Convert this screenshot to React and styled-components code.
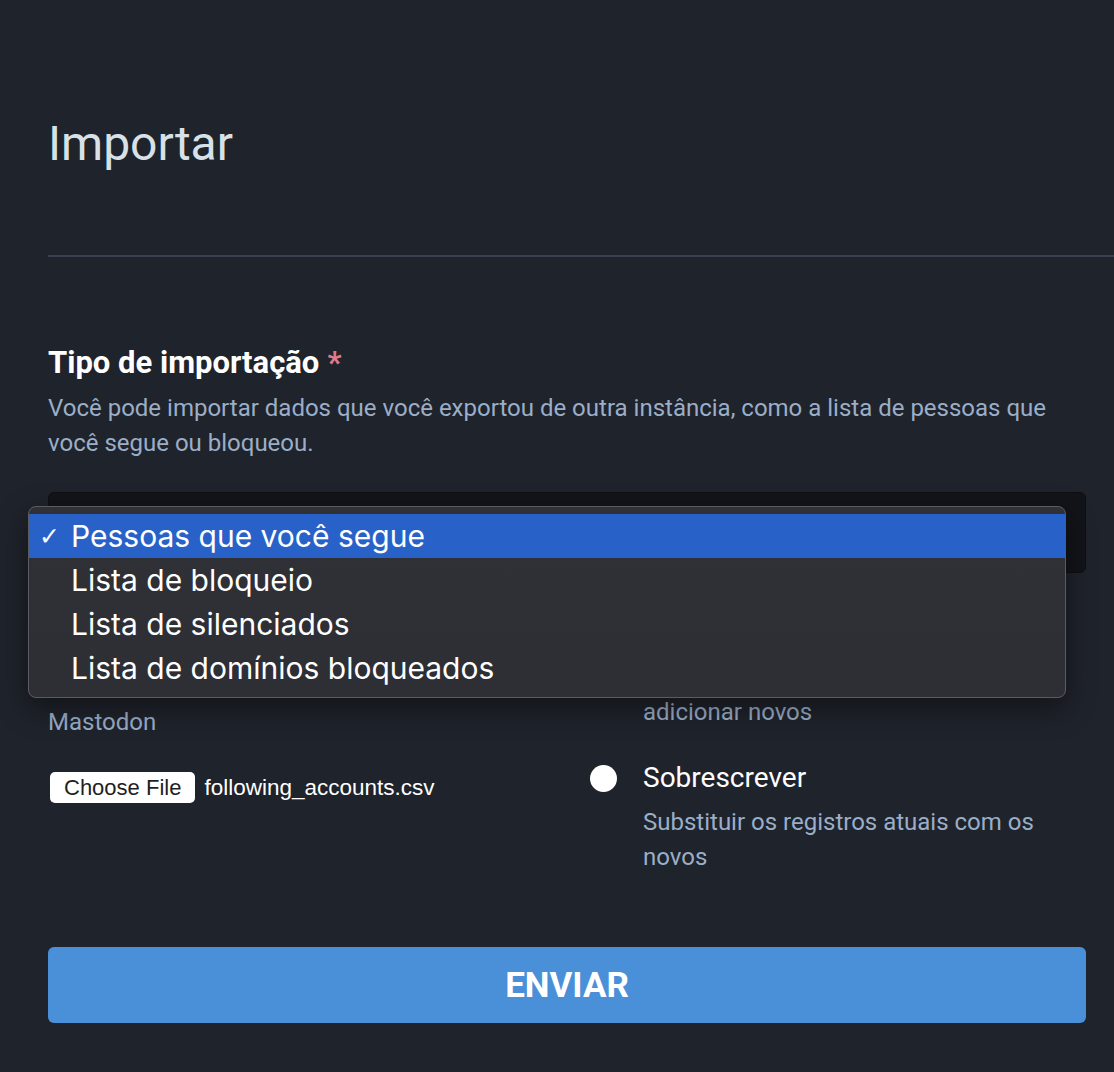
import React from "react";
import styled, { createGlobalStyle } from "styled-components";

const GlobalStyle = createGlobalStyle`
  html, body { margin: 0; padding: 0; background: #1f232b; }
  body { font-family: Roboto, "Noto Sans", sans-serif; -webkit-font-smoothing: antialiased; }
  * { box-sizing: border-box; }
`;

const Page = styled.div`
  min-height: 1072px;
  padding: 108px 0 48px 48px;
  background: #1f232b;
`;

const Title = styled.h1`
  margin: 0;
  font-size: 48px;
  line-height: 72px;
  font-weight: 400;
  color: #d9e1e8;
`;

const Divider = styled.hr`
  margin: 75px 0 0;
  border: 0;
  height: 2px;
  background: #393f4f;
`;

const Form = styled.form`
  padding: 86px 28px 0 0;
`;

const Label = styled.label`
  display: block;
  font-size: 31px;
  line-height: 40px;
  font-weight: 700;
  color: #ffffff;
`;

const Required = styled.abbr`
  color: #df7a8c;
  text-decoration: none;
  margin-left: 8px;
`;

const Hint = styled.p`
  margin: ${(p) => p.$mt ?? 8}px 0 0;
  font-size: 24px;
  line-height: ${(p) => p.$lh || 35}px;
  color: #9baec8;
  white-space: ${(p) => (p.$nowrap ? "nowrap" : "normal")};
`;

const SelectWrap = styled.div`
  position: relative;
  margin-top: 31px;
`;

const SelectBox = styled.div`
  height: 81px;
  background: #131419;
  border: 1px solid #0e0f12;
  border-radius: 6px;
`;

const Menu = styled.ul`
  position: absolute;
  left: -20px;
  top: 14px;
  width: 1038px;
  margin: 0;
  padding: 7px 0 7px;
  list-style: none;
  background: linear-gradient(180deg, #2f3136 0%, #2d2f34 100%);
  border: 1px solid #5a5c61;
  border-radius: 8px;
  box-shadow: 0 10px 30px rgba(0, 0, 0, 0.45);
  z-index: 10;
`;

const MenuItem = styled.li`
  display: flex;
  align-items: center;
  height: 44px;
  padding-left: 10px;
  font-family: Inter, "Liberation Sans", sans-serif;
  font-size: 30px;
  color: #ffffff;
  background: ${(p) => (p.$active ? "#2862c9" : "transparent")};
`;

const Check = styled.span`
  width: 32px;
  font-family: "DejaVu Sans", sans-serif;
  font-size: 25px;
  line-height: 1;
`;

const Columns = styled.div`
  display: grid;
  grid-template-columns: 1fr 1fr;
  column-gap: 46px;
  margin-top: 39px;
`;

const Column = styled.div`
  padding-top: ${(p) => p.$pt || 0}px;
`;

const FileRow = styled.div`
  display: flex;
  align-items: center;
  gap: 9px;
  margin: 30px 0 0 2px;
`;

const FileButton = styled.span`
  display: inline-flex;
  align-items: center;
  height: 31px;
  padding: 0 14px;
  background: #ffffff;
  border-radius: 5px;
  font-family: "Liberation Sans", Arial, sans-serif;
  font-size: 22px;
  color: #1f1f1f;
`;

const FileName = styled.span`
  font-family: "Liberation Sans", Arial, sans-serif;
  font-size: 22.5px;
  color: #ffffff;
`;

const RadioItem = styled.div`
  display: grid;
  grid-template-columns: 53px 1fr;
  margin-top: ${(p) => p.$mt || 0}px;
`;

const RadioDot = styled.span`
  width: 27px;
  height: 27px;
  margin-top: 8px;
  border-radius: 50%;
  background: #ffffff;
`;

const RadioLabel = styled.div`
  font-size: 28px;
  line-height: 42px;
  color: #ffffff;
`;

const Submit = styled.button`
  display: block;
  width: 100%;
  height: 76px;
  margin-top: 72px;
  border: 0;
  border-radius: 6px;
  background: #4a90d9;
  color: #ffffff;
  font-family: Roboto, sans-serif;
  font-size: 35px;
  font-weight: 700;
`;

const options = [
  "Pessoas que você segue",
  "Lista de bloqueio",
  "Lista de silenciados",
  "Lista de domínios bloqueados",
];

export default function App() {
  return (
    <>
      <GlobalStyle />
      <Page>
        <Title>Importar</Title>
        <Divider />
        <Form>
          <div>
            <Label>
              Tipo de importação<Required>*</Required>
            </Label>
            <Hint>
              Você pode importar dados que você exportou de outra instância, como a lista de pessoas que
              você segue ou bloqueou.
            </Hint>
            <SelectWrap>
              <SelectBox />
              <Menu>
                {options.map((o, i) => (
                  <MenuItem key={o} $active={i === 0}>
                    <Check>{i === 0 ? "✓" : ""}</Check>
                    {o}
                  </MenuItem>
                ))}
              </Menu>
            </SelectWrap>
          </div>
          <Columns>
            <Column $pt={2}>
              <Label>
                Dados<Required>*</Required>
              </Label>
              <Hint $nowrap $lh={40}>
                Arquivo CSV exportado de outra instância do
                <br />
                Mastodon
              </Hint>
              <FileRow>
                <FileButton>Choose File</FileButton>
                <FileName>following_accounts.csv</FileName>
              </FileRow>
            </Column>
            <Column>
              <RadioItem>
                <RadioDot />
                <div>
                  <RadioLabel>Mesclar</RadioLabel>
                  <Hint $mt={6} $nowrap>
                    Manter os registros existentes e
                    <br />
                    adicionar novos
                  </Hint>
                </div>
              </RadioItem>
              <RadioItem $mt={27}>
                <RadioDot />
                <div>
                  <RadioLabel>Sobrescrever</RadioLabel>
                  <Hint $mt={6}>Substituir os registros atuais com os novos</Hint>
                </div>
              </RadioItem>
            </Column>
          </Columns>
          <Submit type="button">ENVIAR</Submit>
        </Form>
      </Page>
    </>
  );
}
